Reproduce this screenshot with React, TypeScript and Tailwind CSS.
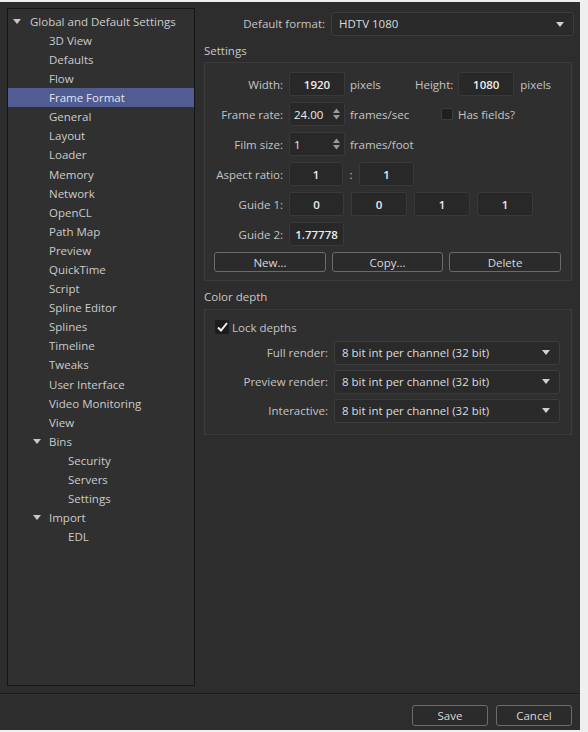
import React from 'react';

const font = { fontFamily: '"Open Sans", "Noto Sans", sans-serif' };

const treeItems: { label: string; level: number; caret?: boolean; selected?: boolean }[] = [
  { label: 'Global and Default Settings', level: 0, caret: true },
  { label: '3D View', level: 1 },
  { label: 'Defaults', level: 1 },
  { label: 'Flow', level: 1 },
  { label: 'Frame Format', level: 1, selected: true },
  { label: 'General', level: 1 },
  { label: 'Layout', level: 1 },
  { label: 'Loader', level: 1 },
  { label: 'Memory', level: 1 },
  { label: 'Network', level: 1 },
  { label: 'OpenCL', level: 1 },
  { label: 'Path Map', level: 1 },
  { label: 'Preview', level: 1 },
  { label: 'QuickTime', level: 1 },
  { label: 'Script', level: 1 },
  { label: 'Spline Editor', level: 1 },
  { label: 'Splines', level: 1 },
  { label: 'Timeline', level: 1 },
  { label: 'Tweaks', level: 1 },
  { label: 'User Interface', level: 1 },
  { label: 'Video Monitoring', level: 1 },
  { label: 'View', level: 1 },
  { label: 'Bins', level: 1, caret: true },
  { label: 'Security', level: 2 },
  { label: 'Servers', level: 2 },
  { label: 'Settings', level: 2 },
  { label: 'Import', level: 1, caret: true },
  { label: 'EDL', level: 2 },
];

function Caret() {
  return (
    <svg width="8" height="5" viewBox="0 0 8 5" className="shrink-0">
      <path d="M0 0 H8 L4 5 Z" fill="#c8c8c8" />
    </svg>
  );
}

function TreeRow({ item }: { item: (typeof treeItems)[number] }) {
  // caret rows start earlier so the label still lines up with its siblings
  let indent = 'pl-[60px]';
  if (item.level === 0) indent = 'pl-[5px]';
  else if (item.level === 1) indent = item.caret ? 'pl-[25px]' : 'pl-[41px]';
  return (
    <div
      className={`flex h-[19.1px] items-center text-[11.5px] leading-none ${indent} ${
        item.selected ? 'bg-[#505c92] text-[#e2e5f0]' : 'text-[#cbcbcb]'
      }`}
    >
      {item.caret && (
        <span className={`flex ${item.level === 0 ? 'w-[17px]' : 'w-[16px]'} items-center`}>
          <Caret />
        </span>
      )}
      <span>{item.label}</span>
    </div>
  );
}

function Field({ value, w = 'w-[56px]', align = 'center', spin = false, cls = '' }: { value: string; w?: string; align?: 'center' | 'left'; spin?: boolean; cls?: string }) {
  return (
    <div
      className={`flex h-[24px] ${w} ${cls} shrink-0 items-center rounded-[2px] border border-[#393939] bg-[#282828] text-[11.5px] text-[#ececec] ${
        align === 'center' ? 'justify-center font-semibold' : 'justify-between pl-[4px] pr-[4px]'
      }`}
    >
      <span>{value}</span>
      {spin && (
        <svg width="7" height="12" viewBox="0 0 7 12">
          <path d="M0 5 L3.5 0.5 L7 5 Z" fill="#9a9a9a" />
          <path d="M0 7 L3.5 11.5 L7 7 Z" fill="#9a9a9a" />
        </svg>
      )}
    </div>
  );
}

function Select({ value, w }: { value: string; w: string }) {
  return (
    <div className={`flex h-[24px] ${w} items-center justify-between rounded-[3px] border border-[#3d3d3d] bg-[#2a2a2a] pl-[7px] pr-[9px] text-[11.5px] text-[#dcdcdc]`}>
      <span>{value}</span>
      <svg width="8" height="5" viewBox="0 0 8 5">
        <path d="M0 0 H8 L4 5 Z" fill="#d0d0d0" />
      </svg>
    </div>
  );
}

function Btn({ label, w }: { label: string; w: string }) {
  return (
    <div className={`flex h-[20px] ${w} items-center justify-center rounded-[3px] border border-[#6b6b6b] bg-[#2b2b2b] text-[11.5px] text-[#d8d8d8]`}>
      {label}
    </div>
  );
}

function Label({ text, w = 'w-[84px]' }: { text: string; w?: string }) {
  return <span className={`${w} shrink-0 pr-[6px] text-right text-[11.5px] text-[#c4c4c4]`}>{text}</span>;
}

const txt = 'text-[11.5px] text-[#c4c4c4]';

export default function App() {
  return (
    <div className="h-[732px] w-[588px] bg-[#efefef] pt-[2px]" style={font}>
      <div className="flex h-[728px] w-[580px] flex-col bg-[#2d2d2d]">
        <div className="flex h-[691px] shrink-0">
          {/* tree */}
          <div className="ml-[7px] mt-[6px] h-[678px] w-[188px] shrink-0 border border-[#151515] bg-[#303030] pt-[3px]">
            {treeItems.map((it) => (
              <TreeRow key={it.label + it.level} item={it} />
            ))}
          </div>

          {/* settings side */}
          <div className="flex w-[385px] flex-col pl-[9px]">
            <div className="mt-[10px] flex items-center">
              <Label text="Default format:" w="w-[127px]" />
              <Select value="HDTV 1080" w="w-[243px]" />
            </div>

            <div className={`mt-[6px] ${txt} text-[#c8c8c8]`}>Settings</div>
            <div className="mt-[3px] flex h-[219px] w-[368px] flex-col gap-[6px] border border-[#3b3b3b] bg-[#2f2f2f] pt-[9px]">
              <div className="flex items-center">
                <Label text="Width:" />
                <Field value="1920" />
                <span className={`ml-[5px] w-[65px] ${txt}`}>pixels</span>
                <span className={txt}>Height:</span>
                <span className="w-[5px]" />
                <Field value="1080" />
                <span className={`ml-[6px] ${txt}`}>pixels</span>
              </div>
              <div className="flex items-center">
                <Label text="Frame rate:" />
                <Field value="24.00" align="left" spin />
                <span className={`ml-[5px] w-[91px] ${txt}`}>frames/sec</span>
                <span className="h-[12px] w-[12px] rounded-[2px] border border-[#3e3e3e] bg-[#1f1f1f]" />
                <span className={`ml-[5px] ${txt}`}>Has fields?</span>
              </div>
              <div className="flex items-center">
                <Label text="Film size:" />
                <Field value="1" align="left" spin />
                <span className={`ml-[5px] ${txt}`}>frames/foot</span>
              </div>
              <div className="flex items-center">
                <Label text="Aspect ratio:" />
                <Field value="1" w="w-[54px]" />
                <span className={`w-[16px] text-center ${txt}`}>:</span>
                <Field value="1" w="w-[55px]" />
              </div>
              <div className="flex items-center">
                <Label text="Guide 1:" />
                <Field value="0" w="w-[55px]" />
                <Field value="0" w="w-[56px]" cls="ml-[7px]" />
                <Field value="1" w="w-[56px]" cls="ml-[7px]" />
                <Field value="1" w="w-[56px]" cls="ml-[7px]" />
              </div>
              <div className="flex items-center">
                <Label text="Guide 2:" />
                <Field value="1.77778" w="w-[55px]" />
              </div>
              <div className="flex items-center gap-[6px] pl-[9px]">
                <Btn label="New..." w="w-[112px]" />
                <Btn label="Copy..." w="w-[111px]" />
                <Btn label="Delete" w="w-[112px]" />
              </div>
            </div>

            <div className={`mt-[7px] ${txt} text-[#c8c8c8]`}>Color depth</div>
            <div className="mt-[3px] flex h-[126px] w-[368px] flex-col border border-[#3b3b3b] bg-[#2f2f2f] pt-[9px]">
              <div className="flex items-center pl-[10px]">
                <span className="flex h-[14px] w-[14px] items-center justify-center rounded-[2px] bg-[#1c1c1c]">
                  <svg width="11" height="10" viewBox="0 0 11 10">
                    <path d="M1 5.5 L4 8.5 L10 1" stroke="#f2f2f2" strokeWidth="2" fill="none" />
                  </svg>
                </span>
                <span className={`ml-[3px] ${txt}`}>Lock depths</span>
              </div>
              <div className="mt-[5px] flex flex-col gap-[5px]">
                {['Full render:', 'Preview render:', 'Interactive:'].map((l) => (
                  <div key={l} className="flex items-center">
                    <Label text={l} w="w-[129px]" />
                    <Select value="8 bit int per channel (32 bit)" w="w-[226px]" />
                  </div>
                ))}
              </div>
            </div>
          </div>
        </div>

        {/* bottom bar */}
        <div className="h-[2px] shrink-0 border-t border-[#1b1b1b] bg-[#333333]" />
        <div className="flex flex-1 items-start justify-end gap-[8px] pr-[8px] pt-[10px]">
          <Btn label="Save" w="w-[76px] h-[21px] border-[#4a4a4a]" />
          <Btn label="Cancel" w="w-[76px] h-[21px] border-[#4a4a4a]" />
        </div>
      </div>
    </div>
  );
}
